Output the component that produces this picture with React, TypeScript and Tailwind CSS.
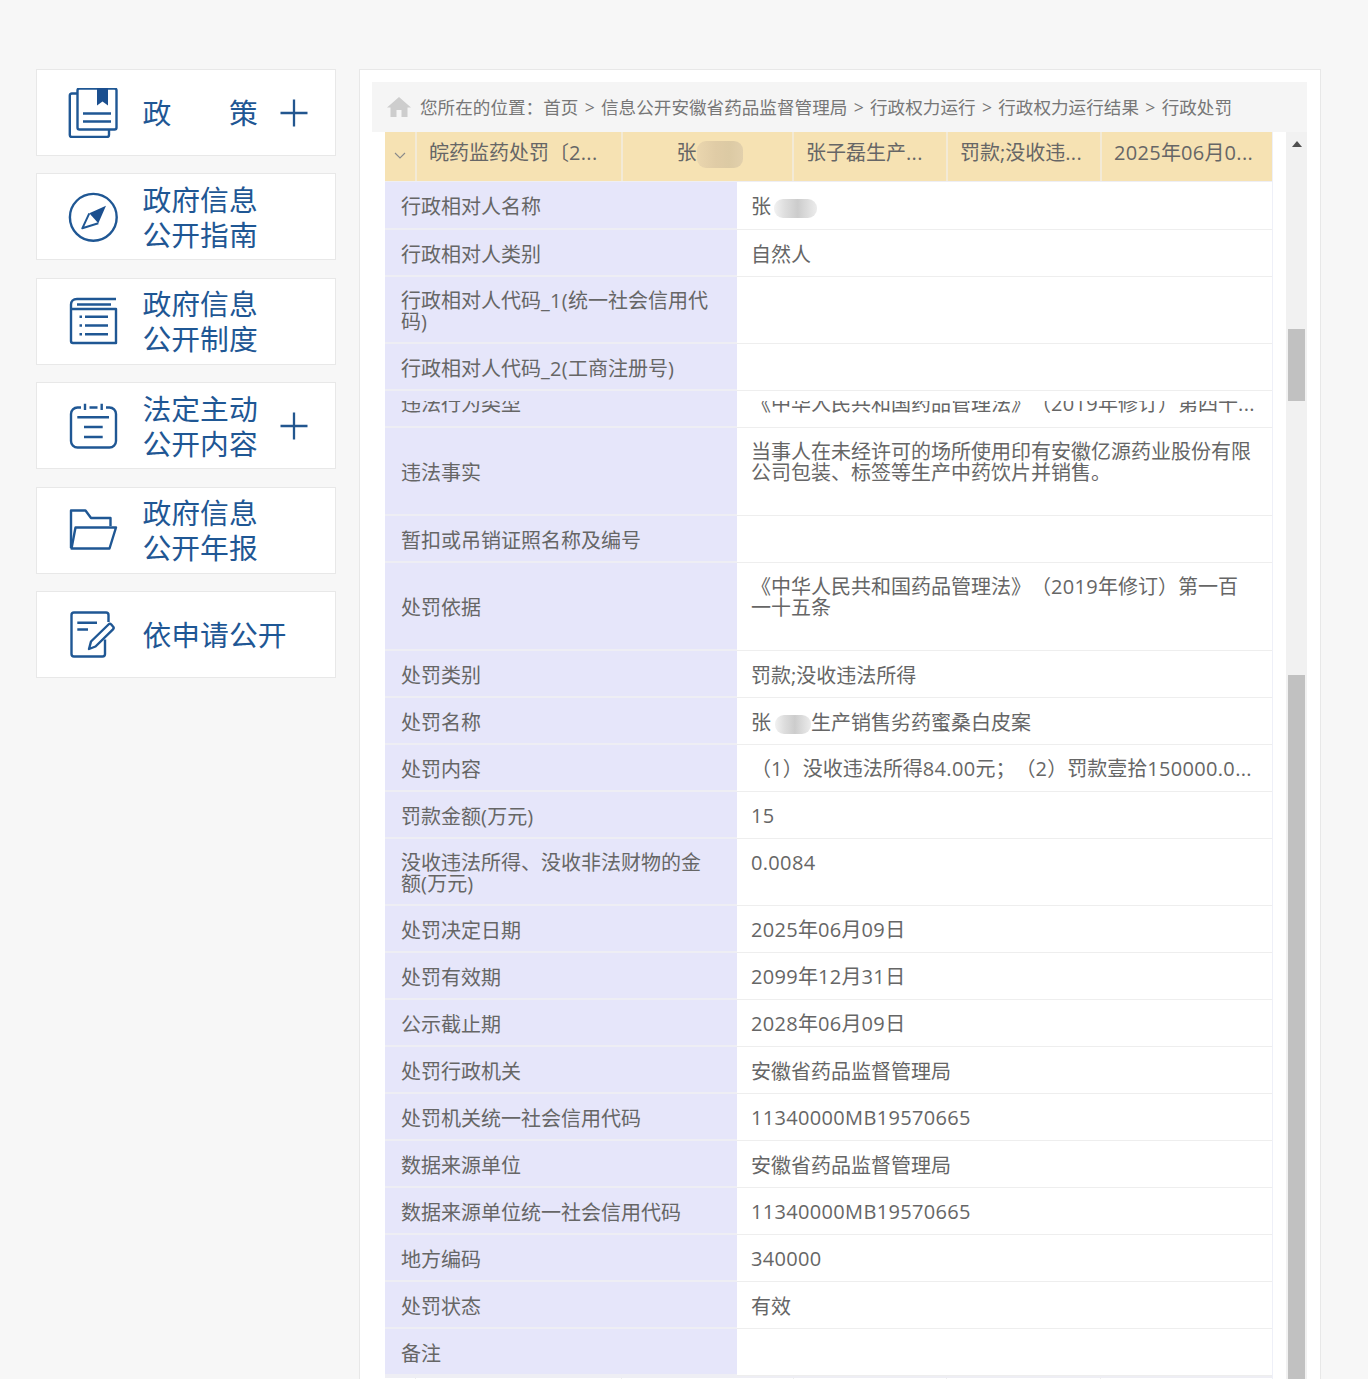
import React from "react";

const FONT = "font-['Open_Sans','Noto_Sans_CJK_SC',sans-serif] [text-spacing-trim:space-all]";

function L({ t }: { t: string }) {
  const parts = t.split(/([0-9A-Za-z_.()]+)/);
  return (
    <>
      {parts.map((p, i) =>
        i % 2 === 1 ? (
          <span key={i} className="tracking-[0.33px]">{p}</span>
        ) : (
          <React.Fragment key={i}>{p}</React.Fragment>
        )
      )}
    </>
  );
}

function Plus() {
  return (
    <svg width="28" height="28" viewBox="0 0 28 28" className="shrink-0 ml-[22px]" stroke="#22568f" strokeWidth="2.3" fill="none">
      <path d="M0.5 14H27.5M14 0.5V27.5" />
    </svg>
  );
}

function IconSvg({ children }: { children: React.ReactNode }) {
  return (
    <svg width="50" height="50" viewBox="0 0 50 50" fill="none" stroke="#1f5794" strokeWidth="2.4" className="shrink-0" strokeLinejoin="round">
      {children}
    </svg>
  );
}

const icons: Record<string, React.ReactNode> = {
  book: (
    <IconSvg>
      <rect x="9.5" y="0.5" width="39" height="41" rx="2" />
      <path d="M9.5 5.5H4a2 2 0 0 0-2.2 2V47a2 2 0 0 0 2 2H39a2 2 0 0 0 2-2V41.5" />
      <path d="M29 0H40V17.5L34.5 13.5L29 17.5Z" fill="#1b4f8f" stroke="none" />
      <path d="M15 25.5H43M15 33.5H43" />
    </IconSvg>
  ),
  compass: (
    <IconSvg>
      <circle cx="25.3" cy="25.3" r="23.4" strokeWidth="2.4" />
      <path d="M38 13.7L21.3 21.3L30.3 31.3Z" fill="#1b4f8f" stroke="none" />
      <path d="M21.3 21.3L14.3 36.3L30.3 31.3" strokeWidth="2" />
    </IconSvg>
  ),
  list: (
    <IconSvg>
      <path d="M48 3H9C5 3 3 5.5 3 8.5V45a2 2 0 0 0 2 2H48V13H3" />
      <path d="M9 8.5H43" />
      <path d="M17 20.8H40M17 29.5H40M17 38.2H40" />
      <path d="M11.5 20.8H14M11.5 29.5H14M11.5 38.2H14" />
    </IconSvg>
  ),
  calendar: (
    <IconSvg>
      <path d="M13 6.5H9.5a6.5 6.5 0 0 0-6.5 6.5V40a6.5 6.5 0 0 0 6.5 6.5H41.5a6.5 6.5 0 0 0 6.5-6.5V13a6.5 6.5 0 0 0-6.5-6.5H38M21.5 6.5H29.5" />
      <path d="M17 2.8V9M33.7 2.8V9" />
      <path d="M9.3 16.2H41M16 26H34.7M16 36H34.7" />
    </IconSvg>
  ),
  folder: (
    <IconSvg>
      <path d="M3 43V5.5H17.5L23 13H42.5V21" />
      <path d="M7.5 22.5H48L41.5 43.5H3.5Z" />
    </IconSvg>
  ),
  edit: (
    <IconSvg>
      <path d="M40.5 13V6a2.5 2.5 0 0 0-2.5-2.5H6A2.5 2.5 0 0 0 3.500 6V45a2.500 2.500 0 0 0 2.500 2.500H34.500A2.500 2.500 0 0 0 37 45V30.500" />
      <path d="M9.300 13.800H29M9.300 20.500H20" />
      <path d="M21 40L23 32.500L40.500 15.500a2 2 0 0 1 2.800 0L45 17.500a2 2 0 0 1 0 2.800L27.500 37.500Z" />
    </IconSvg>
  ),
};

const nav = [
  { icon: "book", lines: ["政　　策"], plus: true },
  { icon: "compass", lines: ["政府信息", "公开指南"] },
  { icon: "list", lines: ["政府信息", "公开制度"] },
  { icon: "calendar", lines: ["法定主动", "公开内容"], plus: true },
  { icon: "folder", lines: ["政府信息", "公开年报"] },
  { icon: "edit", lines: ["依申请公开"] },
];

function Blob({ cls, tone }: { cls: string; tone: "gray" | "tan" }) {
  return (
    <span
      className={`inline-block align-middle rounded-[9px] ${cls} ${
        tone === "gray"
          ? "bg-[linear-gradient(90deg,#f2f2f2,#dedede_25%,#cccccc_55%,#dedede_80%,#ececec)]"
          : "bg-[linear-gradient(90deg,#ead6ae,#e0cca6_40%,#dccaa4_70%,#e2d0ac)]"
      }`}
    />
  );
}

type Row = { label: string; value?: string; node?: React.ReactNode; h: string; clipped?: boolean };

const rows: Row[] = [
  { label: "行政相对人名称", node: <>张<Blob cls="ml-[3px] w-[43px] h-[19px]" tone="gray" /></>, h: "h-[48px]" },
  { label: "行政相对人类别", value: "自然人", h: "h-[47px]" },
  { label: "行政相对人代码_1(统一社会信用代码)", h: "h-[67px]" },
  { label: "行政相对人代码_2(工商注册号)", h: "h-[47px]" },
  { label: "违法行为类型", value: "《中华人民共和国药品管理法》（2019年修订）第四十...", h: "h-[37px]", clipped: true },
  { label: "违法事实", value: "当事人在未经许可的场所使用印有安徽亿源药业股份有限公司包装、标签等生产中药饮片并销售。", h: "h-[88px]" },
  { label: "暂扣或吊销证照名称及编号", h: "h-[47px]" },
  { label: "处罚依据", value: "《中华人民共和国药品管理法》（2019年修订）第一百一十五条", h: "h-[88px]" },
  { label: "处罚类别", value: "罚款;没收违法所得", h: "h-[47px]" },
  { label: "处罚名称", node: <>张<Blob cls="ml-[4px] w-[36px] h-[19px]" tone="gray" />生产销售劣药蜜桑白皮案</>, h: "h-[47px]" },
  { label: "处罚内容", value: "（1）没收违法所得84.00元；（2）罚款壹拾150000.0...", h: "h-[47px]" },
  { label: "罚款金额(万元)", value: "15", h: "h-[47px]" },
  { label: "没收违法所得、没收非法财物的金额(万元)", value: "0.0084", h: "h-[67px]" },
  { label: "处罚决定日期", value: "2025年06月09日", h: "h-[47px]" },
  { label: "处罚有效期", value: "2099年12月31日", h: "h-[47px]" },
  { label: "公示截止期", value: "2028年06月09日", h: "h-[47px]" },
  { label: "处罚行政机关", value: "安徽省药品监督管理局", h: "h-[47px]" },
  { label: "处罚机关统一社会信用代码", value: "11340000MB19570665", h: "h-[47px]" },
  { label: "数据来源单位", value: "安徽省药品监督管理局", h: "h-[47px]" },
  { label: "数据来源单位统一社会信用代码", value: "11340000MB19570665", h: "h-[47px]" },
  { label: "地方编码", value: "340000", h: "h-[47px]" },
  { label: "处罚状态", value: "有效", h: "h-[47px]" },
  { label: "备注", h: "h-[47px]" },
];

function DetailRow({ row }: { row: Row }) {
  const content = row.node ?? (row.value ? <L t={row.value} /> : null);
  const tight = !!row.value && (/[0-9]/.test(row.value) || row.value.length > 25);
  return (
    <div className={`flex ${row.h}`}>
      {row.clipped ? (
        <div className="w-[352px] shrink-0 bg-[#e6e6fa] border-b-2 border-[#eeeef4] pl-4 pr-5 pt-[10px] leading-[21px]">
          <div className="h-[14px] overflow-hidden">
            <div className="-mt-[8px]">{row.label}</div>
          </div>
        </div>
      ) : (
        <div className="w-[352px] shrink-0 bg-[#e6e6fa] border-b-2 border-[#eeeef4] pl-4 pr-5 pt-[3px] flex items-center leading-[21px]">
          <div><L t={row.label} /></div>
        </div>
      )}
      <div className="flex-1 min-w-0 bg-white border-b border-[#eeeeee] pl-[14px] pr-4 leading-[21px]">
        {row.clipped ? (
          <div className="h-[14px] mt-[10px] overflow-hidden">
            <div className="-mt-[8px] whitespace-nowrap">{content}</div>
          </div>
        ) : (
          <div className={tight ? "pt-[12.5px]" : "pt-[13.5px]"}>{content}</div>
        )}
      </div>
    </div>
  );
}

function Crumbs() {
  const items = ["信息公开安徽省药品监督管理局", "行政权力运行", "行政权力运行结果", "行政处罚"];
  return (
    <div className="h-[50px] bg-[#f5f5f5] flex items-center pl-[15px] text-[17.6px] text-[#777777] whitespace-nowrap">
      <svg width="24" height="20" viewBox="0 0 24 20" className="shrink-0 mr-[9px]" fill="#cdcdcd">
        <path d="M12 0L24 10.500H20.500V20H14.500V13H9.500V20H3.500V10.500H0Z" />
      </svg>
      <span>您所在的位置：首页</span>
      {items.map((t) => (
        <React.Fragment key={t}>
          <span className="mx-[6.300px]">&gt;</span>
          <span>{t}</span>
        </React.Fragment>
      ))}
    </div>
  );
}

function HeaderRow() {
  const cell = "h-full border-r-2 border-[#f3ead6] flex items-center min-w-0 shrink-0 pb-[7px] whitespace-nowrap";
  return (
    <div className="h-[50px] flex bg-[#f6e2b3] border-b border-[#eeeef4]">
      <div className={`${cell} w-[32px] justify-center !pb-[2px]`}>
        <svg width="12" height="7" viewBox="0 0 12 7" fill="none" stroke="#8a8a8a" strokeWidth="1.100">
          <path d="M1 1L6 6L11 1" />
        </svg>
      </div>
      <div className={`${cell} w-[206px] px-3`}><span><L t="皖药监药处罚〔2..." /></span></div>
      <div className={`${cell} w-[171px] justify-center pl-[4px]`}>
        <span>张<Blob cls="w-[46px] h-[27px]" tone="tan" /></span>
      </div>
      <div className={`${cell} w-[154px] px-3`}><span><L t="张子磊生产..." /></span></div>
      <div className={`${cell} w-[154px] px-3`}><span><L t="罚款;没收违..." /></span></div>
      <div className="h-full px-3 flex items-center min-w-0 flex-1 pb-[7px] whitespace-nowrap"><span><L t="2025年06月0..." /></span></div>
    </div>
  );
}

function Scrollbar() {
  return (
    <div className="w-[21px] shrink-0 bg-[#f1f1f1] flex flex-col pl-[2px] pr-[2px]">
      <div className="h-[197px] pt-[9px] flex justify-center">
        <svg width="10" height="6" viewBox="0 0 10 6" fill="#505050"><path d="M5 0L10 6H0Z" /></svg>
      </div>
      <div className="h-[72px] bg-[#c1c1c1]" />
      <div className="h-[274px]" />
      <div className="flex-1 bg-[#c1c1c1]" />
    </div>
  );
}

export default function App() {
  return (
    <div className={`${FONT} w-full h-[1379px] overflow-hidden bg-[#f7f7f7] flex pt-[69px] pl-[36px]`}>
      <div className="w-[300px] shrink-0 flex flex-col gap-[17.400px] mr-[23px]">
        {nav.map((n, i) => (
          <div key={i} className="h-[87px] bg-white border border-[#e8e8e8] flex items-center pl-[31px]">
            {icons[n.icon]}
            <div className="ml-[24.500px] text-[28.800px] leading-[35px] text-[#1f5794] whitespace-nowrap">
              {n.lines.map((l) => <div key={l}>{l}</div>)}
            </div>
            {n.plus && <Plus />}
          </div>
        ))}
      </div>
      <div className="w-[962px] h-[1320px] shrink-0 bg-white border border-[#e8e8e8] pt-[12px] pl-[12px] pr-[13px]">
        <Crumbs />
        <div className="flex h-[1260px]">
          <div className="ml-[13px] w-[888px] shrink-0 text-[20px] text-[#666666] border-r border-[#eef0f8]">
            <HeaderRow />
            {rows.map((r) => <DetailRow key={r.label} row={r} />)}
            <div className="h-[1px] bg-[#eeeef4]" />
            <div className="h-[10px] flex border-t border-[#eeeef4]">
              <div className="w-[31px] border-r border-[#eeeeee]" />
              <div className="w-[206px] border-r border-[#eeeeee]" />
              <div className="w-[172px] border-r border-[#eeeeee]" />
              <div className="w-[153px] border-r border-[#eeeeee]" />
              <div className="w-[154px] border-r border-[#eeeeee]" />
            </div>
          </div>
          <div className="w-[13px] shrink-0" />
          <Scrollbar />
        </div>
      </div>
    </div>
  );
}
